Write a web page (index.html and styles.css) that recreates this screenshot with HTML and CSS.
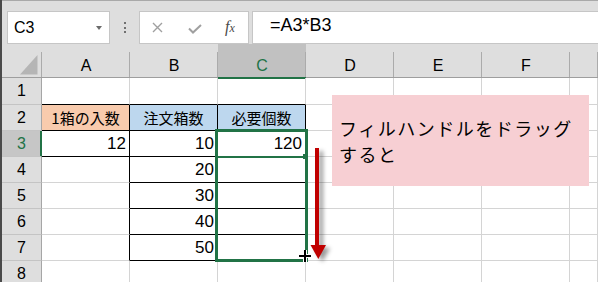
FILE: index.html
```html
<!DOCTYPE html>
<html lang="ja">
<head>
  <meta charset="UTF-8" />
  <title>フィルハンドル</title>
  <link rel="stylesheet" href="styles.css">
</head>
<body>
<div class="window">

  <!-- Formelleiste -->
  <div class="toolbar">
    <div class="namebox"><span>C3</span><span class="drop"></span></div>
    <div class="dots"><i></i><i></i><i></i></div>
    <div class="buttons">
      <svg class="btn-x" width="11" height="11" viewBox="0 0 11 11"><path d="M1 1 L10 10 M10 1 L1 10" stroke="#a0a0a0" stroke-width="1.4" fill="none"/></svg>
      <svg class="btn-ok" width="14" height="10" viewBox="0 0 14 10"><path d="M1 4.5 L5 8.5 L13 1" stroke="#a0a0a0" stroke-width="2" fill="none"/></svg>
      <span class="fx">f<span class="sub">x</span></span>
    </div>
    <div class="formula">=A3*B3</div>
  </div>

  <!-- Tabelle -->
  <div class="sheet">
    <div class="corner"><svg width="18" height="20" viewBox="0 0 18 20"><polygon points="17.5,0 17.5,19.5 0,19.5" fill="#b5b5b5"/></svg></div>
    <div class="colhead">A</div>
    <div class="colhead">B</div>
    <div class="colhead active-col">C</div>
    <div class="colhead">D</div>
    <div class="colhead">E</div>
    <div class="colhead">F</div>
    <div class="colhead"></div>

    <div class="rowhead">1</div>
    <div class="cell bb"></div><div class="cell bb"></div><div class="cell bb"></div>
    <div class="cell"></div><div class="cell"></div><div class="cell"></div><div class="cell"></div>

    <div class="rowhead">2</div>
    <div class="cell label orange bb br">1箱の入数</div>
    <div class="cell label blue bb br">注文箱数</div>
    <div class="cell label blue bb br">必要個数</div>
    <div class="cell"></div><div class="cell"></div><div class="cell"></div><div class="cell"></div>

    <div class="rowhead active-row">3</div>
    <div class="cell num bb br">12</div>
    <div class="cell num bb br">10</div>
    <div class="cell num bb br">120</div>
    <div class="cell"></div><div class="cell"></div><div class="cell"></div><div class="cell"></div>

    <div class="rowhead">4</div>
    <div class="cell br"></div>
    <div class="cell num bb br">20</div>
    <div class="cell bb br"></div>
    <div class="cell"></div><div class="cell"></div><div class="cell"></div><div class="cell"></div>

    <div class="rowhead">5</div>
    <div class="cell br"></div>
    <div class="cell num bb br">30</div>
    <div class="cell bb br"></div>
    <div class="cell"></div><div class="cell"></div><div class="cell"></div><div class="cell"></div>

    <div class="rowhead">6</div>
    <div class="cell br"></div>
    <div class="cell num bb br">40</div>
    <div class="cell bb br"></div>
    <div class="cell"></div><div class="cell"></div><div class="cell"></div><div class="cell"></div>

    <div class="rowhead">7</div>
    <div class="cell br"></div>
    <div class="cell num bb br">50</div>
    <div class="cell bb br"></div>
    <div class="cell"></div><div class="cell"></div><div class="cell"></div><div class="cell"></div>

    <div class="rowhead">8</div>
    <div class="cell"></div><div class="cell"></div><div class="cell"></div>
    <div class="cell"></div><div class="cell"></div><div class="cell"></div><div class="cell"></div>

    <!-- Auswahl C3:C7 und aktive Zelle -->
    <div class="selection"></div>
    <div class="active-cell"></div>

    <div class="callout">フィルハンドルをドラッグ<br>すると</div>

    <svg class="drag-arrow" width="24" height="116" viewBox="0 0 24 116">
      <path d="M10 1 V100" stroke="#c00000" stroke-width="4"/>
      <polygon points="3.5,98 19,98 11.3,112" fill="#c00000"/>
    </svg>

    <svg class="cursor" width="16" height="16" viewBox="0 0 16 16">
      <path d="M2 8 H14 M8 2 V14" stroke="#fff" stroke-width="4"/>
      <path d="M2 8 H14 M8 2 V14" stroke="#000" stroke-width="2"/>
    </svg>
  </div>

</div>
</body>
</html>
```

FILE: styles.css
```css
html, body {
  margin: 0;
  height: 100%;
  overflow: hidden;
}
body {
  font-family: "Liberation Sans", Arial, sans-serif;
  background: #fff;
  color: #000;
}
.window {
  border-left: 2px solid #4a4a4a;
  height: 282px;
  box-sizing: border-box;
}

/* Formelleiste */
.toolbar {
  display: flex;
  height: 44px;
  box-sizing: border-box;
  border-top: 1px solid #a9a9a9;
  padding-top: 10px;
  background: #dedede;
}
.namebox {
  width: 103px;
  margin-left: 5px;
  box-sizing: border-box;
  border: 1px solid #c6c6c6;
  background: #fff;
  display: flex;
  align-items: center;
  padding: 0 7px 0 6px;
  font-size: 16px;
}
.drop {
  margin-left: auto;
  width: 0;
  height: 0;
  border-left: 3.5px solid transparent;
  border-right: 3.5px solid transparent;
  border-top: 4px solid #6b6b6b;
}
.dots {
  width: 29px;
  display: flex;
  flex-direction: column;
  align-items: center;
  justify-content: center;
  gap: 2.5px;
}
.dots i {
  width: 2px;
  height: 2px;
  background: #707070;
}
.buttons {
  width: 110px;
  box-sizing: border-box;
  border: 1px solid #c6c6c6;
  background: #fff;
  display: flex;
  align-items: center;
  padding-left: 12px;
}
.btn-ok {
  margin-left: 25px;
  margin-top: 2px;
}
.fx {
  margin-left: 23px;
  margin-top: -2px;
  font-family: "Liberation Serif", serif;
  font-style: italic;
  font-size: 16px;
  color: #4a4a4a;
}
.fx .sub {
  font-size: 12px;
}
.formula {
  flex: 1;
  margin-left: 3px;
  border: 1px solid #c6c6c6;
  border-right: none;
  background: #fff;
  padding-left: 17px;
  font-size: 18px;
  line-height: 27px;
}

/* Tabelle */
.sheet {
  position: relative;
  display: grid;
  grid-template-columns: 40px repeat(6, 88px) 1fr;
  grid-template-rows: 34px 27px repeat(7, 26px);
  background: #fff;
}
.sheet > div {
  box-sizing: border-box;
}
.corner, .colhead {
  background: linear-gradient(#ababab, #ababab) right bottom / 1px 25px no-repeat, #dedede;
  border-bottom: 1px solid #9e9e9e;
}
.corner {
  display: flex;
  align-items: flex-end;
  justify-content: flex-end;
  padding: 0 4px 2px 0;
}
.colhead {
  display: flex;
  justify-content: center;
  align-items: center;
  padding-top: 10px;
  font-size: 16px;
}
.colhead.active-col {
  background-color: #c1c1c1;
  color: #217346;
  border-bottom-color: #217346;
  box-shadow: 0 1px 0 #217346;
}
.rowhead {
  background: #dedede;
  border-right: 1px solid #a6a6a6;
  border-bottom: 1px solid #c4c4c4;
  display: flex;
  align-items: center;
  justify-content: center;
  font-size: 16px;
}
.rowhead.active-row {
  background: #c6c6c6;
  color: #217346;
  border-right-color: #217346;
  box-shadow: inset -1px 0 0 #217346;
}
.cell {
  border-right: 1px solid #d4d4d4;
  border-bottom: 1px solid #d4d4d4;
  padding: 0 3px;
  font-size: 17px;
  line-height: 25px;
  white-space: nowrap;
}
.cell.bb {
  border-bottom-color: #000;
}
.cell.br {
  border-right-color: #000;
}
.num {
  text-align: right;
}
.label {
  font-family: "Noto Sans CJK JP", sans-serif;
  font-size: 15px;
  text-align: center;
}
.orange {
  background: #f8cbad;
}
.blue {
  background: #bdd7ee;
}

/* liegt ueber den Zellen, Bezug ist die Grid-Flaeche */
.selection {
  position: absolute;
  grid-column: 4 / 5;
  grid-row: 4 / 9;
  top: -2px;
  bottom: -1px;
  left: -3px;
  right: -2px;
  border: 3px solid #217346;
}
.active-cell {
  position: absolute;
  grid-column: 4 / 5;
  grid-row: 4 / 5;
  top: 0;
  left: 0;
  right: 0;
  bottom: -1px;
  border-bottom: 2px solid #217346;
}
.active-cell::after {
  content: "";
  position: absolute;
  right: -2px;
  bottom: -3px;
  width: 5px;
  height: 5px;
  background: #217346;
}

.callout {
  position: absolute;
  left: 330px;
  top: 51px;
  width: 257px;
  height: 91px;
  box-sizing: border-box;
  background: #f7cfd3;
  padding-left: 7px;
  display: flex;
  flex-direction: column;
  justify-content: center;
  font-family: "Noto Sans CJK JP", sans-serif;
  font-size: 18px;
  letter-spacing: 1.5px;
  line-height: 26px;
}
.drag-arrow {
  position: absolute;
  left: 305px;
  top: 103px;
  filter: drop-shadow(4px 3px 2px rgba(0, 0, 0, 0.4));
}
.cursor {
  position: absolute;
  left: 295px;
  top: 204px;
}
```
